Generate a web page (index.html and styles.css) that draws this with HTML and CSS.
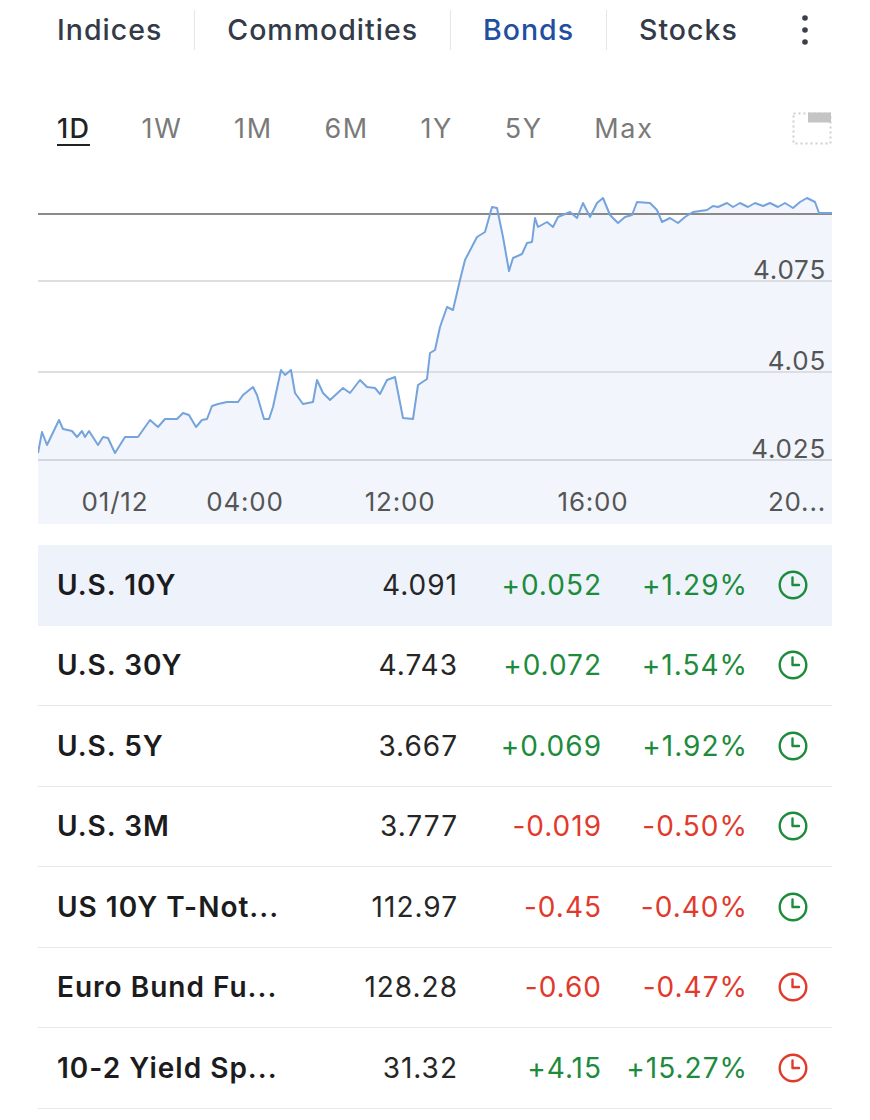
FILE: index.html
```html
<!DOCTYPE html>
<html>
<head>
<meta charset="utf-8">
<link rel="stylesheet" href="styles.css">
</head>
<body>
<div class="page">
  <nav class="tabs">
    <span class="tab">Indices</span><span class="sep"></span>
    <span class="tab">Commodities</span><span class="sep"></span>
    <span class="tab active">Bonds</span><span class="sep"></span>
    <span class="tab">Stocks</span>
    <span class="more"><svg width="8" height="32" viewBox="0 0 8 32"><circle cx="4" cy="4" r="2.8" fill="#3a3f4a"/><circle cx="4" cy="16" r="2.8" fill="#3a3f4a"/><circle cx="4" cy="28" r="2.8" fill="#3a3f4a"/></svg></span>
  </nav>

  <div class="ranges">
    <span class="range active">1D</span>
    <span class="range">1W</span>
    <span class="range">1M</span>
    <span class="range">6M</span>
    <span class="range">1Y</span>
    <span class="range">5Y</span>
    <span class="range">Max</span>
    <span class="expand"><svg width="40" height="34" viewBox="0 0 40 34"><rect x="1.5" y="2.5" width="37" height="30" fill="none" stroke="#cfcfcf" stroke-width="2" stroke-dasharray="2 3"/><rect x="16" y="1.5" width="23" height="10" fill="#c4c4c4"/></svg></span>
  </div>

  <div class="chart">
    <svg width="794" height="344" viewBox="38 180 794 344">
      <rect x="38" y="180" width="794" height="344" fill="#ffffff"/>
      <polygon fill="#f2f5fc" points="38,524 38,453 42,432 47,445 59,420 63,429 72,431 77,437 82,431 85,437 89,431 98,445 103,437 108,438 115,453 125,437 138,437 150,420 158,427 165,419 177,419 183,413 189,415 196,427 202,420 207,419 212,406 218,404 227,402 238,402 243,395 253,387 257,395 264,419 269,419 273,407 281,370 285,375 291,370 295,393 303,404 313,402 317,380 323,393 330,400 343,388 350,393 360,380 367,387 375,388 380,394 387,380 395,377 403,418 413,419 418,385 427,379 430,353 435,350 440,327 447,307 453,310 460,280 465,260 477,237 485,232 492,207 497,208 503,237 509,271 513,258 522,254 527,243 532,242 535,218 538,227 547,222 553,227 558,217 570,212 577,218 583,203 590,217 597,203 603,198 610,215 618,223 625,217 632,215 637,202 650,203 657,210 662,222 670,218 678,223 685,217 693,212 707,210 713,206 718,207 727,203 733,207 740,203 748,207 755,203 763,206 770,203 778,207 785,203 793,208 800,202 807,198 815,202 819,213 832,213 832,524"/>
      <line x1="38" y1="281" x2="832" y2="281" stroke="#dcdee2" stroke-width="2"/>
      <line x1="38" y1="372" x2="832" y2="372" stroke="#dcdee2" stroke-width="2"/>
      <line x1="38" y1="460" x2="832" y2="460" stroke="#d3d6dc" stroke-width="2"/>
      <line x1="38" y1="214" x2="832" y2="214" stroke="#8a8a8a" stroke-width="2"/>
      <polyline fill="none" stroke="#75a3dc" stroke-width="2" stroke-linejoin="round" points="38,453 42,432 47,445 59,420 63,429 72,431 77,437 82,431 85,437 89,431 98,445 103,437 108,438 115,453 125,437 138,437 150,420 158,427 165,419 177,419 183,413 189,415 196,427 202,420 207,419 212,406 218,404 227,402 238,402 243,395 253,387 257,395 264,419 269,419 273,407 281,370 285,375 291,370 295,393 303,404 313,402 317,380 323,393 330,400 343,388 350,393 360,380 367,387 375,388 380,394 387,380 395,377 403,418 413,419 418,385 427,379 430,353 435,350 440,327 447,307 453,310 460,280 465,260 477,237 485,232 492,207 497,208 503,237 509,271 513,258 522,254 527,243 532,242 535,218 538,227 547,222 553,227 558,217 570,212 577,218 583,203 590,217 597,203 603,198 610,215 618,223 625,217 632,215 637,202 650,203 657,210 662,222 670,218 678,223 685,217 693,212 707,210 713,206 718,207 727,203 733,207 740,203 748,207 755,203 763,206 770,203 778,207 785,203 793,208 800,202 807,198 815,202 819,213 832,213"/>
      <text class="axis" x="826" y="279" text-anchor="end">4.075</text>
      <text class="axis" x="826" y="370" text-anchor="end">4.05</text>
      <text class="axis" x="826" y="458" text-anchor="end">4.025</text>
      <text class="axis" x="115" y="511" text-anchor="middle">01/12</text>
      <text class="axis" x="245" y="511" text-anchor="middle">04:00</text>
      <text class="axis" x="400" y="511" text-anchor="middle">12:00</text>
      <text class="axis" x="593" y="511" text-anchor="middle">16:00</text>
      <text class="axis" x="826" y="511" text-anchor="end">20...</text>
    </svg>
  </div>

  <div class="table">
    <div class="row selected">
      <span class="name">U.S. 10Y</span><span class="num">4.091</span><span class="num up">+0.052</span><span class="num up">+1.29%</span>
      <span class="clock up"><svg width="32" height="32" viewBox="0 0 32 32"><circle cx="16" cy="16" r="13.3" fill="none" stroke="currentColor" stroke-width="2.4"/><path d="M15.5 8.5V16H22" fill="none" stroke="currentColor" stroke-width="2.4" stroke-linecap="round" stroke-linejoin="round"/></svg></span>
    </div>
    <div class="row">
      <span class="name">U.S. 30Y</span><span class="num">4.743</span><span class="num up">+0.072</span><span class="num up">+1.54%</span>
      <span class="clock up"><svg width="32" height="32" viewBox="0 0 32 32"><circle cx="16" cy="16" r="13.3" fill="none" stroke="currentColor" stroke-width="2.4"/><path d="M15.5 8.5V16H22" fill="none" stroke="currentColor" stroke-width="2.4" stroke-linecap="round" stroke-linejoin="round"/></svg></span>
    </div>
    <div class="row">
      <span class="name">U.S. 5Y</span><span class="num">3.667</span><span class="num up">+0.069</span><span class="num up">+1.92%</span>
      <span class="clock up"><svg width="32" height="32" viewBox="0 0 32 32"><circle cx="16" cy="16" r="13.3" fill="none" stroke="currentColor" stroke-width="2.4"/><path d="M15.5 8.5V16H22" fill="none" stroke="currentColor" stroke-width="2.4" stroke-linecap="round" stroke-linejoin="round"/></svg></span>
    </div>
    <div class="row">
      <span class="name">U.S. 3M</span><span class="num">3.777</span><span class="num down">-0.019</span><span class="num down">-0.50%</span>
      <span class="clock up"><svg width="32" height="32" viewBox="0 0 32 32"><circle cx="16" cy="16" r="13.3" fill="none" stroke="currentColor" stroke-width="2.4"/><path d="M15.5 8.5V16H22" fill="none" stroke="currentColor" stroke-width="2.4" stroke-linecap="round" stroke-linejoin="round"/></svg></span>
    </div>
    <div class="row">
      <span class="name">US 10Y T-Not...</span><span class="num">112.97</span><span class="num down">-0.45</span><span class="num down">-0.40%</span>
      <span class="clock up"><svg width="32" height="32" viewBox="0 0 32 32"><circle cx="16" cy="16" r="13.3" fill="none" stroke="currentColor" stroke-width="2.4"/><path d="M15.5 8.5V16H22" fill="none" stroke="currentColor" stroke-width="2.4" stroke-linecap="round" stroke-linejoin="round"/></svg></span>
    </div>
    <div class="row">
      <span class="name">Euro Bund Fu...</span><span class="num">128.28</span><span class="num down">-0.60</span><span class="num down">-0.47%</span>
      <span class="clock down"><svg width="32" height="32" viewBox="0 0 32 32"><circle cx="16" cy="16" r="13.3" fill="none" stroke="currentColor" stroke-width="2.4"/><path d="M15.5 8.5V16H22" fill="none" stroke="currentColor" stroke-width="2.4" stroke-linecap="round" stroke-linejoin="round"/></svg></span>
    </div>
    <div class="row">
      <span class="name">10-2 Yield Sp...</span><span class="num">31.32</span><span class="num up">+4.15</span><span class="num up">+15.27%</span>
      <span class="clock down"><svg width="32" height="32" viewBox="0 0 32 32"><circle cx="16" cy="16" r="13.3" fill="none" stroke="currentColor" stroke-width="2.4"/><path d="M15.5 8.5V16H22" fill="none" stroke="currentColor" stroke-width="2.4" stroke-linecap="round" stroke-linejoin="round"/></svg></span>
    </div>
  </div>
</div>
</body>
</html>
```

FILE: styles.css
```css
html, body {
  margin: 0;
  padding: 0;
  background: #ffffff;
}
body {
  font-family: Inter, "Noto Sans", "Liberation Sans", sans-serif;
  color: #1c1c1e;
}
.page {
  width: 794px;
  margin-left: 38px;
}
.tabs {
  display: flex;
  align-items: center;
  height: 60px;
  padding-left: 19px;
}
.tab {
  font-size: 28.5px;
  font-weight: 500;
  letter-spacing: 1px;
  color: #333a48;
  line-height: 60px;
}
.tab.active {
  color: #1f4ea2;
}
.sep {
  width: 1px;
  height: 40px;
  background: #e4e6ea;
  margin: 0 32px;
}
.more {
  margin-left: auto;
  margin-right: 23px;
  display: flex;
  align-items: center;
}
.ranges {
  display: flex;
  align-items: center;
  height: 56px;
  margin-top: 40px;
  padding-left: 19px;
  gap: 51.5px;
}
.range {
  font-size: 27px;
  letter-spacing: 1.7px;
  color: #7a7a7a;
  line-height: 30px;
  padding-top: 3px;
  border-bottom: 2px solid transparent;
}
.range.active {
  color: #222222;
  font-weight: 500;
  letter-spacing: 1.2px;
  border-bottom-color: #222222;
}
.expand {
  margin-left: auto;
  display: flex;
}
.chart {
  margin-top: 24px;
  height: 344px;
}
.chart svg {
  display: block;
}
.axis {
  font-family: Inter, "Noto Sans", "Liberation Sans", sans-serif;
  font-size: 26px;
  letter-spacing: 0.8px;
  fill: #555555;
}
.table {
  margin-top: 21px;
}
.row {
  display: grid;
  grid-template-columns: 243px 158px 144px 146px 84px;
  align-items: center;
  box-sizing: border-box;
  height: 80.5px;
  padding-left: 19px;
  border-bottom: 1px solid #e6e8ec;
  font-size: 28px;
  letter-spacing: 1px;
}
.row.selected {
  background: #eef2fb;
  border-bottom-color: #eef2fb;
}
.name {
  font-weight: 600;
  color: #1c1c1e;
  white-space: nowrap;
}
.num {
  text-align: right;
  color: #262626;
}
.up {
  color: #1d8b3c;
}
.down {
  color: #e13a2c;
}
.clock {
  display: flex;
  padding-left: 29px;
}
.clock svg {
  display: block;
}
```
